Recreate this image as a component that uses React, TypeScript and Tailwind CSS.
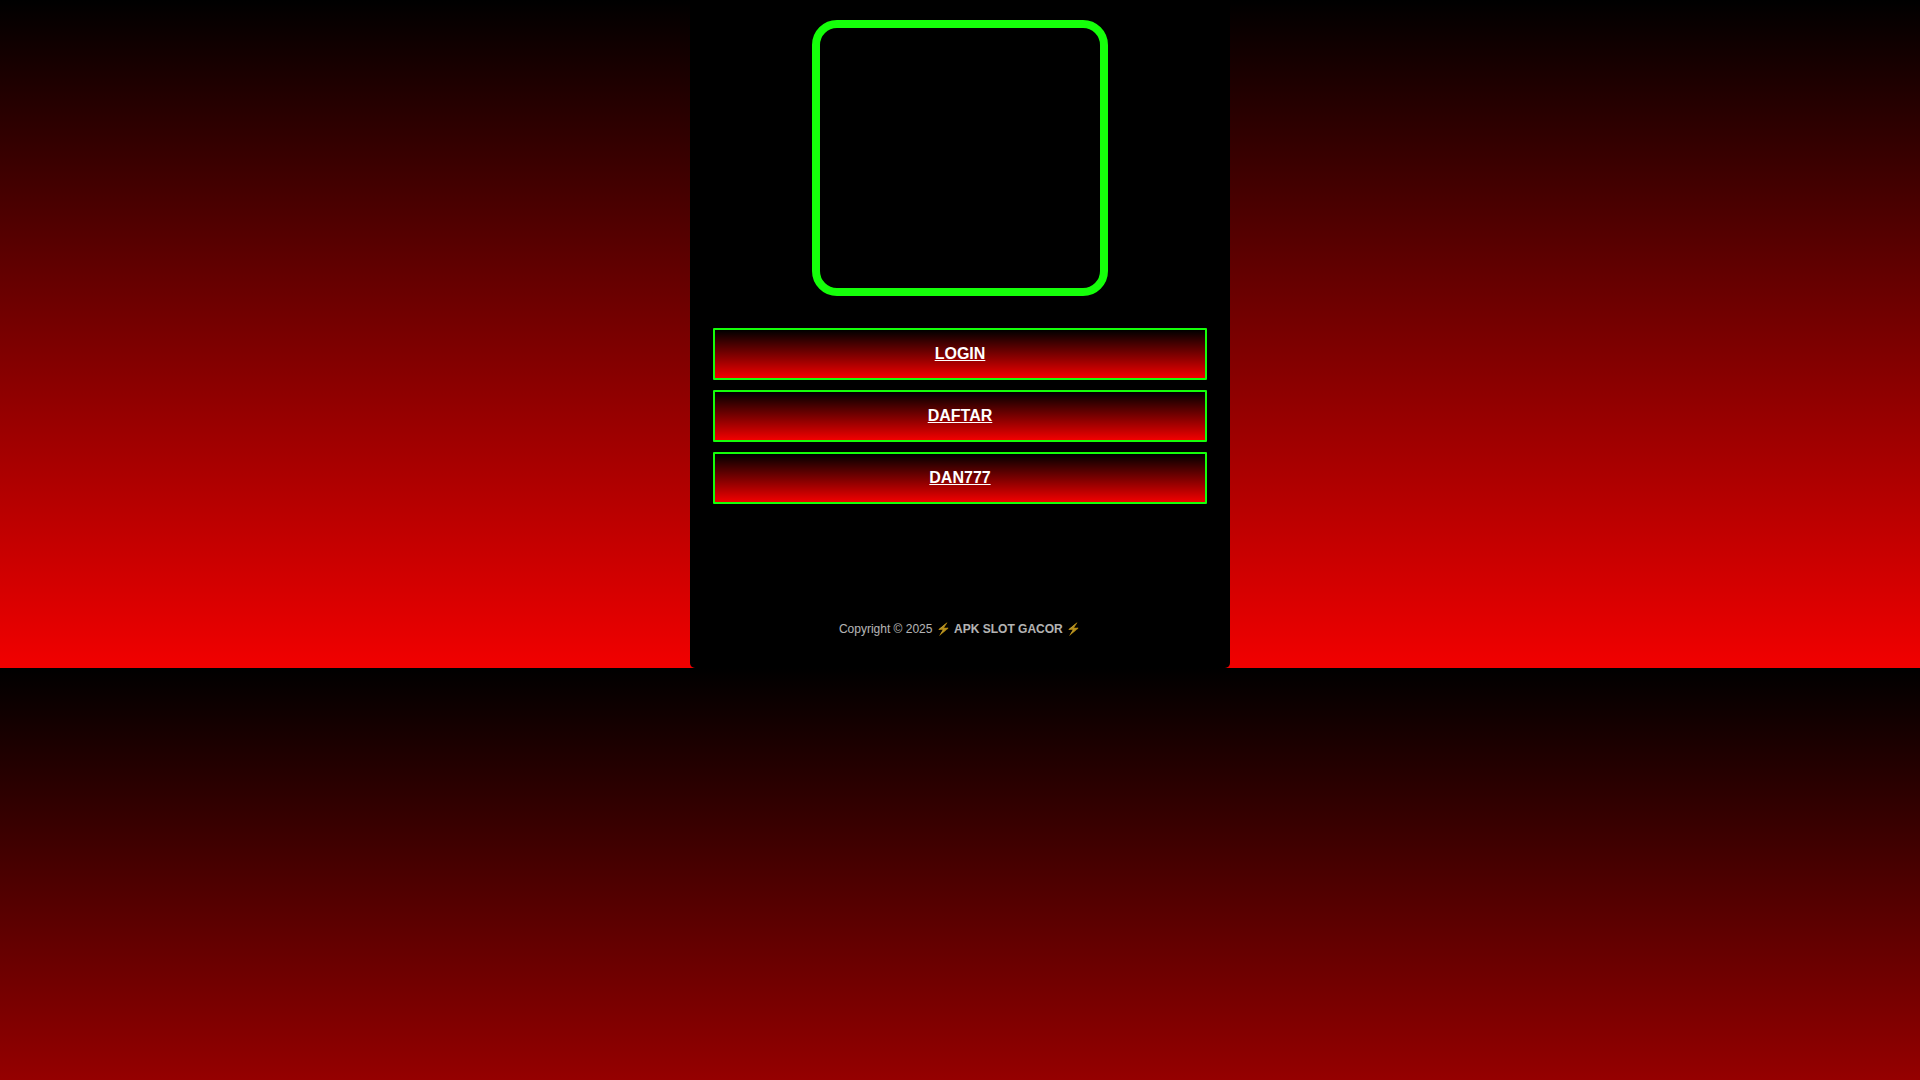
const links = [
  { label: "LOGIN", href: "#login" },
  { label: "DAFTAR", href: "#daftar" },
  { label: "DAN777", href: "#dan777" },
];

function LinkButton({ label, href }: { label: string; href: string }) {
  return (
    <a
      href={href}
      className="block rounded-[1px] border-2 border-[#15ff0a] bg-linear-to-b/srgb from-black to-[#f20000] py-3 text-center text-base font-bold text-white underline"
    >
      {label}
    </a>
  );
}

export default function App() {
  return (
    // the backdrop gradient tiles once per panel height
    <div className="min-h-screen bg-linear-to-b/srgb from-black to-[#f20000] bg-[length:100%_668px] font-[Arial,'Liberation_Sans',sans-serif] [text-rendering:optimizeSpeed]">
      <main className="mx-auto max-w-[540px] rounded-b-[5px] bg-black px-[23px] pt-5 pb-6">
        <div className="mx-auto h-[276px] w-[296px] max-w-full rounded-[25px] border-8 border-[#15ff0a]" />

        <nav className="mt-8 flex flex-col gap-[10px]">
          {links.map((link) => (
            <LinkButton key={link.label} {...link} />
          ))}
        </nav>

        <footer className="mt-[113px] pb-[3px] text-center text-xs leading-6 text-white opacity-70">
          Copyright © 2025 ⚡ <strong>APK SLOT GACOR</strong> ⚡
        </footer>
      </main>
    </div>
  );
}
